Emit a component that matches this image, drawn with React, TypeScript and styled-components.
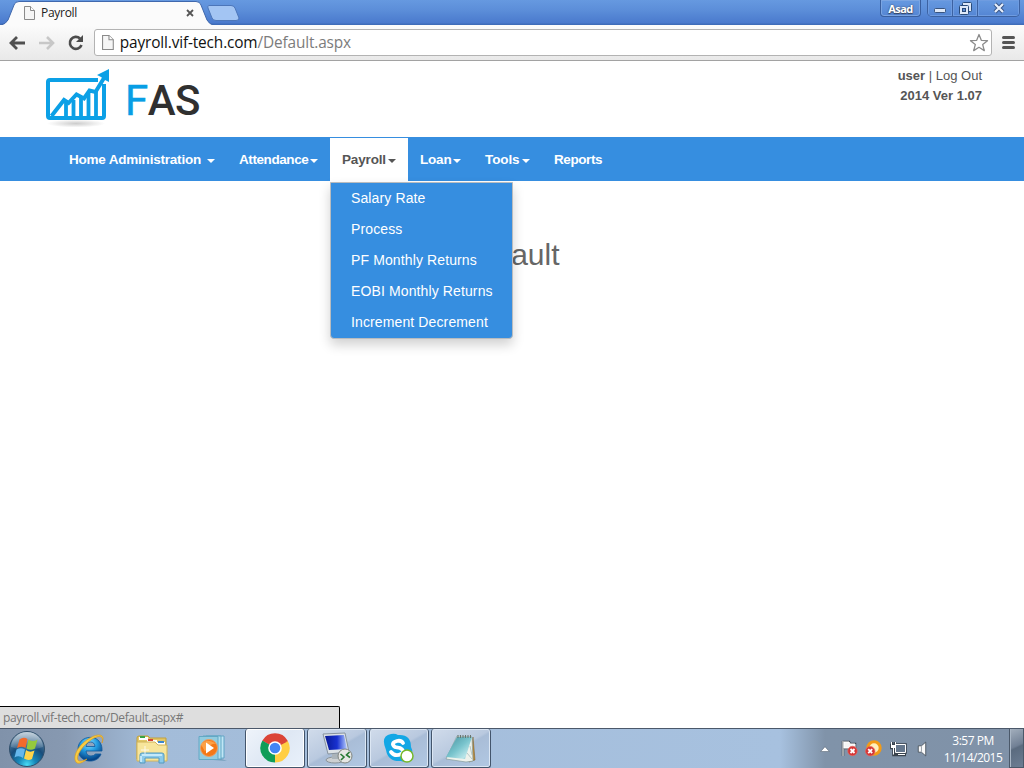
import React from "react";
import styled, { createGlobalStyle } from "styled-components";

const GlobalStyle = createGlobalStyle`
  * { box-sizing: border-box; }
  body { margin: 0; background: #fff; overflow: hidden; }
  svg { display: block; flex: none; }
`;

const ui = `"Open Sans", "Noto Sans", sans-serif`;
const arial = `"Liberation Sans", Arial, sans-serif`;

const Screen = styled.div`
  width: 1024px;
  height: 768px;
  display: flex;
  flex-direction: column;
  overflow: hidden;
  background: #fff;
`;

/* ---------- browser chrome ---------- */
const TitleBar = styled.header`
  height: 25px;
  flex: none;
  display: flex;
  background: linear-gradient(#6699e0 0, #5c8ed9 10px, #4a7acd 23px, #3e6cb9 24px);
`;
const TabShape = styled.div`
  position: relative;
  width: 240px;
  height: 25px;
  & > svg { position: absolute; left: 0; top: 0; }
`;
const TabLabel = styled.div`
  position: relative;
  display: flex;
  align-items: center;
  height: 25px;
  padding: 1px 0 0 24px;
  font: 12px/24px ${ui};
  color: #222;
  & > svg { position: static; }
  & > span { margin-left: 6px; width: 145px; letter-spacing: -0.3px; }
`;
const WindowControls = styled.div`
  margin-left: auto;
  display: flex;
  align-items: flex-start;
`;
const UserButton = styled.div`
  width: 41px;
  height: 17px;
  margin-right: 6px;
  border: 1px solid #395f9f;
  border-top: 0;
  border-radius: 0 0 4px 4px;
  box-shadow: inset 0 0 0 1px #7ba5e2;
  color: #fff;
  font: bold 11px/18px ${ui};
  letter-spacing: -0.55px;
  text-align: center;
  text-shadow: 0 0 2px #34405a, 0 1px 1px #34405a;
`;
const ControlGroup = styled.div`
  display: flex;
  height: 17px;
  margin-right: 4px;
  border: 1px solid #3c62a2;
  border-top: 0;
  border-radius: 0 0 5px 5px;
  overflow: hidden;
`;
const Control = styled.div<{ $w: number }>`
  width: ${(p) => p.$w}px;
  height: 16px;
  display: flex;
  align-items: center;
  justify-content: center;
  box-shadow: inset 0 0 0 1px #6f9ce0;
  & + & { border-left: 1px solid #3c62a2; }
`;
const Toolbar = styled.div`
  height: 36px;
  flex: none;
  display: flex;
  align-items: center;
  padding: 0 8px 0 9px;
  background: linear-gradient(#fbfbfb, #e9e9e9);
  border-bottom: 1px solid #a2a2a2;
`;
const Omnibox = styled.div`
  width: 898px;
  height: 27px;
  margin-left: 9px;
  display: flex;
  align-items: center;
  padding: 0 2px 0 7px;
  border: 1px solid #b3b3b3;
  border-radius: 3px;
  background: #fff;
`;
const Url = styled.div`
  flex: 1;
  margin-left: 6px;
  font: 15.4px/25px ${ui};
  letter-spacing: -0.15px;
  color: #111;
  & > span { color: #7c7c7c; }
`;
const ToolIcon = styled.div<{ $left: number }>`
  margin-left: ${(p) => p.$left}px;
`;

/* ---------- web page ---------- */
const PageHeader = styled.div`
  height: 76px;
  flex: none;
  display: flex;
  justify-content: space-between;
  padding: 5px 42px 0 44px;
`;
const Brand = styled.div`
  display: flex;
  font: 500 42px/70px Roboto, ${arial};
  letter-spacing: -0.5px;
  color: #303030;
  & > span { margin-left: 13px; }
  & b { font-weight: 400; color: #089ee5; -webkit-text-stroke: 0.5px #089ee5; }
`;
const Account = styled.div`
  text-align: right;
  font: 13px/20px ${arial};
  color: #555;
  & > div { white-space: nowrap; }
`;
const Nav = styled.nav`
  height: 44px;
  flex: none;
  display: flex;
  padding: 1px 0 0 57px;
  background: #368ee0;
`;
const NavItem = styled.div<{ $open?: boolean; $width: number; $track: number }>`
  position: relative;
  width: ${(p) => p.$width}px;
  height: 43px;
  display: flex;
  align-items: center;
  justify-content: space-between;
  padding: 0 12px;
  white-space: nowrap;
  font: bold 13.5px/43px ${arial};
  letter-spacing: ${(p) => p.$track}px;
  color: ${(p) => (p.$open ? "#555" : "#fff")};
  background: ${(p) => (p.$open ? "#fff" : "transparent")};
`;
const Caret = styled.i`
  margin: 3px 0 0;
  border: 4px solid transparent;
  border-top-color: currentColor;
  border-bottom: 0;
`;
const Menu = styled.div`
  position: absolute;
  z-index: 2;
  left: 0;
  top: 44px;
  width: 183px;
  border: 1px solid #b9bcbf;
  border-radius: 0 0 4px 4px;
  background: #368ee0;
  box-shadow: 0 6px 12px rgba(0, 0, 0, 0.18);
`;
const MenuItem = styled.div`
  height: 31px;
  padding-left: 20px;
  font: 14px/30px ${arial};
  letter-spacing: 0.12px;
  color: #fff;
  white-space: nowrap;
`;
const Content = styled.main`
  flex: 1;
  display: flex;
  flex-direction: column;
  justify-content: space-between;
`;
const Heading = styled.h2`
  margin: 57px 0 0;
  text-align: center;
  font: 30px/33px ${arial};
  color: #666;
`;
const StatusBubble = styled.div`
  width: 340px;
  height: 22px;
  padding-left: 3px;
  border: solid #000;
  border-width: 1px 1px 0 0;
  border-top-right-radius: 2px;
  background: #dedede;
  font: 12px/22px ${ui};
  letter-spacing: -0.34px;
  color: #777;
`;

/* ---------- taskbar ---------- */
const Taskbar = styled.footer`
  height: 40px;
  flex: none;
  display: flex;
  align-items: stretch;
  border-top: 1px solid #4b586a;
  background: linear-gradient(90deg, #8092aa 0, #8799b1 65px, #a3bcd9 150px, #a7c1df 780px, #8093a9 825px, #8092a8 100%);
`;
const Launcher = styled.div<{ $w: number }>`
  width: ${(p) => p.$w}px;
  display: flex;
  align-items: center;
  justify-content: center;
`;
const TaskButton = styled.div<{ $active?: boolean }>`
  width: 60px;
  height: 39px;
  margin-right: 2px;
  display: flex;
  align-items: center;
  justify-content: center;
  border: 1px solid #43556c;
  border-top: 0;
  border-radius: 3px;
  box-shadow: inset 0 0 0 1px ${(p) => (p.$active ? "#fff" : "#dce7f4")};
  background: ${(p) =>
    p.$active
      ? "linear-gradient(135deg, #eff4fb, #dfe8f4 50%, #e9f1fb)"
      : "linear-gradient(150deg, #d1dceb, #b9c9df 48%, #a9bdd7 52%, #b1c8e3)"};
`;
const Tray = styled.div`
  margin-left: auto;
  display: flex;
  align-items: center;
`;
const TrayIcon = styled.div<{ $right: number }>`
  margin-right: ${(p) => p.$right}px;
`;
const Clock = styled.div`
  width: 60px;
  margin-right: 6px;
  text-align: center;
  font: 12px/17px ${ui};
  letter-spacing: -0.5px;
  color: #fff;
  white-space: nowrap;
`;
const ShowDesktop = styled.div`
  width: 15px;
  height: 39px;
  border: 1px solid #4b596a;
  border-top: 0;
  box-shadow: inset 1px 0 #a9b6c5;
  background: linear-gradient(155deg, #a3afbd, #718095 45%, #5b6b7f 50%, #6c7d93);
`;

const PageIcon = ({ size = 14 }: { size?: number }) => (
  <svg width={size * 0.79} height={size} viewBox="0 0 11 14">
    <path d="M.5.5h6l4 4v9H.5z" fill="#f6f6f6" stroke="#8a8a8a" />
    <path d="M6.500.5v4h4" fill="#fff" stroke="#8a8a8a" />
  </svg>
);

const Logo = () => (
  <svg width="68" height="64" viewBox="44 66 68 64">
    <defs>
      <radialGradient id="logoShadow">
        <stop offset="0" stopColor="#ccc" />
        <stop offset="1" stopColor="#fff" />
      </radialGradient>
    </defs>
    <ellipse cx="76" cy="123.500" rx="29" ry="4" fill="url(#logoShadow)" />
    <path d="M98 80H50q-2 0-2 2v34q0 2 2 2h52q2 0 2-2V84" fill="#fff" stroke="#0ca0e6" strokeWidth="4" />
    <path d="M51.500 116L64 100l4.500 3 8-8.500 7.500 4 5.500-8 6 1.500L104 78" fill="none" stroke="#0ca0e6" strokeWidth="4" />
    <path d="M66 101v15M73.500 100v16M81 97v19M88.500 93v23M96 91v25" stroke="#0ca0e6" strokeWidth="3.800" />
    <path d="M97 75l12-6v13l-4-2-4-3z" fill="#0ca0e6" />
  </svg>
);

const StartOrb = () => (
  <svg width="38" height="38" viewBox="0 0 38 38">
    <defs>
      <radialGradient id="orb" cx=".5" cy=".95" r=".9">
        <stop offset="0" stopColor="#48dcf5" />
        <stop offset=".28" stopColor="#1687b9" />
        <stop offset=".6" stopColor="#184d7b" />
        <stop offset="1" stopColor="#688ba7" />
      </radialGradient>
      <linearGradient id="orbGloss" x2="0" y2="1">
        <stop stopColor="#fff" stopOpacity=".6" />
        <stop offset="1" stopColor="#fff" stopOpacity=".08" />
      </linearGradient>
    </defs>
    <circle cx="19" cy="19" r="17.500" fill="url(#orb)" stroke="#304f6b" />
    <path d="M3 17a16 15 0 0 1 32 0Q19 23 3 17" fill="url(#orbGloss)" />
    <path d="M11.500 9.500q4-3 8-.5l-2 9q-4-2.500-8.500 0z" fill="#f26a2b" />
    <path d="M20.500 9.500q4.500 3 9 0l-2.500 9q-4 2.500-8.500 0z" fill="#94c93d" />
    <path d="M8.500 19.500q4.500-2.500 8.500 0l-2 8.500q-4-3-8.500-.5z" fill="#65b7ec" />
    <path d="M18 20q4 3 8.500.5l-2.500 8.500q-4 2-8-.5z" fill="#ffd44a" />
  </svg>
);

const ExplorerE = () => (
  <svg width="34" height="34" viewBox="0 0 34 34">
    <defs>
      <radialGradient id="ieBlue" cx=".45" cy=".25" r=".7">
        <stop stopColor="#8adfff" />
        <stop offset=".5" stopColor="#239be0" />
        <stop offset="1" stopColor="#064488" />
      </radialGradient>
    </defs>
    <path d="M29 22C26 32 7 32 6 18 5 2 31 0 30 19H14q.5 5 5 5 3 0 4.500-2zM14 14.500h9q-.5-4.500-4.500-4.500T14 14.500z" fill="url(#ieBlue)" stroke="#12589b" strokeWidth=".8" fillRule="evenodd" />
    <path d="M30 11C34 2 26 1 18 6 7 12 0 24 4 30c2 3 8 0 11-3-4 2-8 3-9 1C3 23 14 10 22 6c6-3 10-2 8 5z" fill="#f8cc42" stroke="#d99c22" strokeWidth=".7" />
  </svg>
);

const Folder = () => (
  <svg width="34" height="32" viewBox="0 0 34 32">
    <path d="M2 5q0-2 2-2h9l2 2h16v21H2z" fill="#e2c767" stroke="#c1a13e" />
    <path d="M4 4h9v3H4z" fill="#fff" /><path d="M5 3h5v2H5z" fill="#3aa442" />
    <path d="M12 7h10v3H12z" fill="#fff" /><path d="M13 6h5v2h-5z" fill="#d74330" />
    <path d="M22 9h8v3h-8z" fill="#fff" /><path d="M23 8h6v2h-6z" fill="#3d87cc" />
    <path d="M2 9h18l3 3h9v16H2z" fill="#f7e59b" stroke="#d1b45a" />
    <path d="M5 30V22q0-2 2-2h20q2 0 2 2v8h-5v-5H10v5z" fill="#8bcaea" stroke="#559bc0" />
    <path d="M7 22h20M6 23v6" stroke="#d8f3ff" strokeWidth="1.500" />
    <path d="M10 13v8M6 17h8" stroke="#fff" opacity=".8" />
  </svg>
);

const MediaPlayer = () => (
  <svg width="30" height="28" viewBox="0 0 30 28">
    <path d="M15 25l14 1-8-3z" fill="#77a1bd" />
    <path d="M8 1h18v22l-18 1z" fill="#c0e6f5" stroke="#60a4c5" />
    <path d="M5 1h18v23H5z" fill="#b1dfef" stroke="#63a8c5" />
    <path d="M1 1.500h19v23H1z" fill="#92ccdf" stroke="#63a8c5" />
    <circle cx="11" cy="13" r="8.500" fill="#f47816" stroke="#e9a065" />
    <path d="M3 9.500q6-7 15-1-7 0-11 8z" fill="#ffad57" opacity=".75" />
    <path d="M8 7.500v11l8-5.500z" fill="#fff" />
  </svg>
);

const ChromeIcon = () => (
  <svg width="30" height="30" viewBox="0 0 30 30">
    <path d="M15 15L2.300 7.700A14.600 14.600 0 0 1 27.700 7.700z" fill="#db4437" />
    <path d="M15 15L27.700 7.700A14.600 14.600 0 0 1 15 29.600z" fill="#ffce44" />
    <path d="M15 15L15 29.600A14.600 14.600 0 0 1 2.300 7.700z" fill="#0f9d58" />
    <path d="M15 8.200h13L15 15z" fill="#db4437" />
    <path d="M20.900 18.400L15 29.600V15z" fill="#ffce44" />
    <path d="M9.100 18.400L2.300 7.700 15 15z" fill="#0f9d58" />
    <circle cx="15" cy="15" r="6.800" fill="#fff" />
    <circle cx="15" cy="15" r="5.300" fill="#4285f4" />
  </svg>
);

const RemoteDesktop = () => (
  <svg width="34" height="34" viewBox="0 0 34 34">
    <defs>
      <linearGradient id="remoteScreen">
        <stop stopColor="#091a96" /><stop offset=".55" stopColor="#1831d0" /><stop offset="1" stopColor="#b5ccff" />
      </linearGradient>
    </defs>
    <ellipse cx="15" cy="29" rx="9" ry="3" fill="#cdd0d2" stroke="#8a9297" />
    <path d="M12 22h9v6h-9z" fill="#abb4ba" />
    <path d="M3 3l22-1 4 19-21 2z" fill="#dce2e6" stroke="#87939f" />
    <path d="M5 5l19-1 3 14-18 1z" fill="url(#remoteScreen)" />
    <circle cx="25" cy="25" r="7" fill="#e6e7e5" stroke="#818681" />
    <path d="M20.500 23l3.500 3-3 3M29.500 21l-3 3 3.500 2.500" fill="none" stroke="#287a35" strokeWidth="1.600" />
  </svg>
);

const SkypeIcon = () => (
  <svg width="32" height="31" viewBox="0 0 32 31">
    <path d="M8 1q4-1 7 1 13-1 13 12 3 6-1 11-3 5-9 3Q5 29 3 17-3 3 8 1z" fill="#13a7e5" />
    <path d="M20 10q-2-3-6-2-7 2-2 6l5 1q6 3 1 6-6 3-10-2" fill="none" stroke="#fff" strokeWidth="3.800" strokeLinecap="round" />
    <circle cx="24" cy="23" r="6" fill="#fff" stroke="#76b82a" strokeWidth="1.500" />
  </svg>
);

const Notepad = () => (
  <svg width="32" height="31" viewBox="0 0 32 31">
    <defs>
      <linearGradient id="noteCover" x2="1" y2="1">
        <stop stopColor="#458f9d" /><stop offset=".5" stopColor="#79c4cd" /><stop offset=".8" stopColor="#b9e5e9" /><stop offset="1" stopColor="#62adb8" />
      </linearGradient>
    </defs>
    <path d="M28 4l2 23-6 2z" fill="#ba8a39" stroke="#775b27" strokeWidth=".5" />
    <path d="M27 4l1 24-7 1L1 26 12 3z" fill="#eef2ec" stroke="#859c9c" strokeWidth=".7" />
    <path d="M12 4h15l-7 22-19-2z" fill="url(#noteCover)" />
    <path d="M13 2v3M15.500 2v3M18 2v3M20.500 2v3M23 2v3M25.500 2v3" stroke="#68756e" />
    <path d="M22 20l5 6M25 13l2 9" stroke="#9fb6b4" strokeWidth=".7" />
  </svg>
);

const ErrorBadge = ({ x, y }: { x: number; y: number }) => (
  <g transform={`translate(${x} ${y})`}>
    <circle r="4.700" fill="#d53535" stroke="#e7665f" strokeWidth=".7" />
    <path d="M-2-2l4 4M2-2l-4 4" stroke="#fff" strokeWidth="1.800" />
  </g>
);

const menuEntries = ["Salary Rate", "Process", "PF Monthly Returns", "EOBI Monthly Returns", "Increment Decrement"];

export default function App() {
  return (
    <Screen>
      <GlobalStyle />
      <TitleBar>
        <TabShape>
          <svg width="240" height="25" viewBox="0 0 240 25">
            <path d="M0 25.500Q6 24 8 20L14 5Q15 1.500 19 1.500H196Q200 1.500 201 5L207 20Q209 24 214 25.500" fill="#fbfbfb" stroke="#3f68ad" />
            <path d="M209 5.500H231Q234 5.500 235 8l4 10q0 2.500-3 2.500H216Q213 20.500 212 18l-4-10q-1-2 1-2.500z" fill="#a3c5f3" stroke="#4c76b9" />
          </svg>
          <TabLabel>
            <PageIcon />
            <span>Payroll</span>
            <svg width="8" height="8" viewBox="0 0 8 8"><path d="M1 1l6 6M7 1L1 7" stroke="#555" strokeWidth="1.800" /></svg>
          </TabLabel>
        </TabShape>
        <WindowControls>
          <UserButton>Asad</UserButton>
          <ControlGroup>
            <Control $w={24}><svg width="12" height="12" viewBox="0 0 12 12"><rect x=".5" y="6.500" width="11" height="4" rx="1" fill="#dfe9f8" stroke="#39547f" /></svg></Control>
            <Control $w={25}>
              <svg width="13" height="13" viewBox="0 0 13 13">
                <rect x="3.500" y=".5" width="9" height="9" rx="1" fill="#dfe9f8" stroke="#294a79" />
                <rect x=".5" y="3.500" width="9" height="9" rx="1" fill="#dfe9f8" stroke="#294a79" />
                <rect x="3.500" y="6.500" width="3" height="3" fill="#5f8ed5" stroke="#294a79" />
              </svg>
            </Control>
            <Control $w={42}><svg width="12" height="12" viewBox="0 0 12 12"><path d="M2 2l8 8M10 2l-8 8" stroke="#375485" strokeWidth="4" /><path d="M2 2l8 8M10 2l-8 8" stroke="#e8f0fc" strokeWidth="2.200" /></svg></Control>
          </ControlGroup>
        </WindowControls>
      </TitleBar>
      <Toolbar>
        <svg width="17" height="16" viewBox="0 0 17 16"><path d="M16 8H3M8 2L2 8l6 6" fill="none" stroke="#505050" strokeWidth="2.800" /></svg>
        <ToolIcon $left={13}><svg width="16" height="16" viewBox="0 0 16 16"><path d="M0 8h13M8 2l6 6-6 6" fill="none" stroke="#c7c7c7" strokeWidth="2.600" /></svg></ToolIcon>
        <ToolIcon $left={12}><svg width="18" height="18" viewBox="0 0 18 18"><path d="M13 4.500A6 6 0 1 0 14.500 11" fill="none" stroke="#4c4c4c" strokeWidth="2.600" /><path d="M16 1v7H9z" fill="#4c4c4c" /></svg></ToolIcon>
        <Omnibox>
          <PageIcon size={15} />
          <Url>payroll.vif-tech.com<span>/Default.aspx</span></Url>
          <svg width="20" height="20" viewBox="0 0 20 20"><path d="M10 1.500l2.300 5.800 6.200.4-4.800 3.900 1.600 6-5.300-3.300-5.300 3.300 1.600-6-4.800-3.900 6.200-.4z" fill="#fff" stroke="#8b8b8b" strokeWidth="1.300" strokeLinejoin="round" /></svg>
        </Omnibox>
        <ToolIcon $left={10}><svg width="13" height="13" viewBox="0 0 13 13"><path d="M1.500 1.500h10M1.500 6.500h10M1.500 11.500h10" stroke="#555" strokeWidth="3" strokeLinecap="round" /></svg></ToolIcon>
      </Toolbar>

      <PageHeader>
        <Brand><Logo /><span><b>F</b>AS</span></Brand>
        <Account><div><b>user</b> | Log Out</div><div><b>2014 Ver 1.07</b></div></Account>
      </PageHeader>
      <Nav>
        <NavItem $width={170} $track={-0.21}>Home Administration<Caret /></NavItem>
        <NavItem $width={103} $track={-0.42}>Attendance<Caret /></NavItem>
        <NavItem $open $width={78} $track={-0.15}>
          Payroll<Caret />
          <Menu>{menuEntries.map((entry) => <MenuItem key={entry}>{entry}</MenuItem>)}</Menu>
        </NavItem>
        <NavItem $width={65} $track={-0.2}>Loan<Caret /></NavItem>
        <NavItem $width={69} $track={-0.1}>Tools<Caret /></NavItem>
        <NavItem $width={72} $track={-0.42}>Reports</NavItem>
      </Nav>
      <Content>
        <Heading>Default</Heading>
        <StatusBubble>payroll.vif-tech.com/Default.aspx#</StatusBubble>
      </Content>

      <Taskbar>
        <Launcher $w={54}><StartOrb /></Launcher>
        <Launcher $w={70}><ExplorerE /></Launcher>
        <Launcher $w={55}><Folder /></Launcher>
        <Launcher $w={68}><MediaPlayer /></Launcher>
        <TaskButton $active style={{ marginLeft: -2 }}><ChromeIcon /></TaskButton>
        <TaskButton><RemoteDesktop /></TaskButton>
        <TaskButton><SkypeIcon /></TaskButton>
        <TaskButton><Notepad /></TaskButton>
        <Tray>
          <TrayIcon $right={11}><svg width="10" height="6" viewBox="0 0 10 6"><path d="M.7 5.500L5 .7l4.300 4.800z" fill="#fff" stroke="#5c6979" strokeWidth=".6" /></svg></TrayIcon>
          <TrayIcon $right={7}><svg width="17" height="17" viewBox="0 0 17 17"><path d="M2 1v15M3 2h5l1 2h5v6H9L8 8H3z" fill="#f5f5f5" stroke="#424a53" strokeWidth="2.500" /><path d="M2 1v15M3 2h5l1 2h5v6H9L8 8H3z" fill="#f5f5f5" stroke="#fff" /><ErrorBadge x={11.5} y={11} /></svg></TrayIcon>
          <TrayIcon $right={8}><svg width="17" height="17" viewBox="0 0 17 17"><circle cx="9" cy="8" r="6.200" fill="#fff0bd" stroke="#f39b16" strokeWidth="3" /><ErrorBadge x={5.2} y={11.2} /></svg></TrayIcon>
          <TrayIcon $right={10}><svg width="17" height="16" viewBox="0 0 17 16"><path d="M5.500 3.500h10v8h-10zM7 14h9M2 1v3M5 1v3M1 4h5v3H1zM3.500 7v7H7" fill="none" stroke="#39434e" strokeWidth="2.600" /><path d="M5.500 3.500h10v8h-10z" fill="#65778d" stroke="#fff" /><path d="M8 13.500h7M1.500 1v3M5.500 1v3M3.500 7v6.500" fill="none" stroke="#fff" /><path d="M1 4h5v3H1z" fill="#fff" /></svg></TrayIcon>
          <TrayIcon $right={16}><svg width="10" height="16" viewBox="0 0 9 15"><path d="M1 4.500h3l4-3.500v13l-4-3.500H1z" fill="#f9f9f9" stroke="#424c57" strokeWidth=".8" /><path d="M4 5v5" stroke="#8a939e" strokeWidth=".8" /></svg></TrayIcon>
          <Clock>3:57 PM<br />11/14/2015</Clock>
          <ShowDesktop />
        </Tray>
      </Taskbar>
    </Screen>
  );
}
